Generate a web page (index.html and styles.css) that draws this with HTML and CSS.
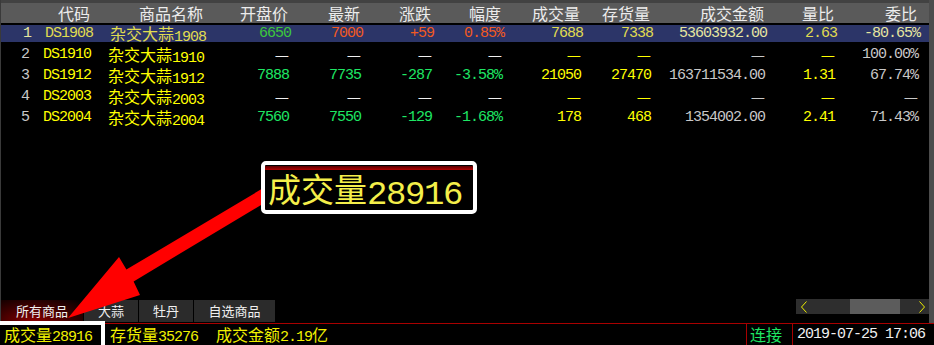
FILE: index.html
```html
<!DOCTYPE html>
<html lang="zh-CN">
<head>
    <meta charset="UTF-8">
    <title>行情列表</title>
    <link rel="stylesheet" href="styles.css">
</head>
<body>
    <div class="screen">
        <div class="main">
            <div class="quotes">
                <div class="row head">
                    <div class="c"></div>
                    <div class="c">代码</div>
                    <div class="c">商品名称</div>
                    <div class="c">开盘价</div>
                    <div class="c">最新</div>
                    <div class="c">涨跌</div>
                    <div class="c">幅度</div>
                    <div class="c">成交量</div>
                    <div class="c">存货量</div>
                    <div class="c">成交金额</div>
                    <div class="c">量比</div>
                    <div class="c">委比</div>
                </div>

                <div class="row sel">
                    <div class="c pale">1</div>
                    <div class="c yel">DS1908</div>
                    <div class="c yel"><span class="cn">杂交大蒜</span>1908</div>
                    <div class="c grn">6650</div>
                    <div class="c red">7000</div>
                    <div class="c red">+59</div>
                    <div class="c red">0.85%</div>
                    <div class="c yel">7688</div>
                    <div class="c yel">7338</div>
                    <div class="c pale">53603932.00</div>
                    <div class="c yel">2.63</div>
                    <div class="c pale">-80.65%</div>
                </div>

                <div class="row">
                    <div class="c gry">2</div>
                    <div class="c yel">DS1910</div>
                    <div class="c yel"><span class="cn">杂交大蒜</span>1910</div>
                    <div class="c wht"><span class="cn">—</span></div>
                    <div class="c wht"><span class="cn">—</span></div>
                    <div class="c wht"><span class="cn">—</span></div>
                    <div class="c wht"><span class="cn">—</span></div>
                    <div class="c yel"><span class="cn">—</span></div>
                    <div class="c yel"><span class="cn">—</span></div>
                    <div class="c gry"><span class="cn">—</span></div>
                    <div class="c yel"><span class="cn">—</span></div>
                    <div class="c gry">100.00%</div>
                </div>

                <div class="row">
                    <div class="c gry">3</div>
                    <div class="c yel">DS1912</div>
                    <div class="c yel"><span class="cn">杂交大蒜</span>1912</div>
                    <div class="c up">7888</div>
                    <div class="c up">7735</div>
                    <div class="c up">-287</div>
                    <div class="c up">-3.58%</div>
                    <div class="c yel">21050</div>
                    <div class="c yel">27470</div>
                    <div class="c gry">163711534.00</div>
                    <div class="c yel">1.31</div>
                    <div class="c gry">67.74%</div>
                </div>

                <div class="row">
                    <div class="c gry">4</div>
                    <div class="c yel">DS2003</div>
                    <div class="c yel"><span class="cn">杂交大蒜</span>2003</div>
                    <div class="c wht"><span class="cn">—</span></div>
                    <div class="c wht"><span class="cn">—</span></div>
                    <div class="c wht"><span class="cn">—</span></div>
                    <div class="c wht"><span class="cn">—</span></div>
                    <div class="c yel"><span class="cn">—</span></div>
                    <div class="c yel"><span class="cn">—</span></div>
                    <div class="c gry"><span class="cn">—</span></div>
                    <div class="c yel"><span class="cn">—</span></div>
                    <div class="c gry"><span class="cn">—</span></div>
                </div>

                <div class="row">
                    <div class="c gry">5</div>
                    <div class="c yel">DS2004</div>
                    <div class="c yel"><span class="cn">杂交大蒜</span>2004</div>
                    <div class="c up">7560</div>
                    <div class="c up">7550</div>
                    <div class="c up">-129</div>
                    <div class="c up">-1.68%</div>
                    <div class="c yel">178</div>
                    <div class="c yel">468</div>
                    <div class="c gry">1354002.00</div>
                    <div class="c yel">2.41</div>
                    <div class="c gry">71.43%</div>
                </div>
            </div>

            <div class="bottom">
                <div class="tabs">
                    <div class="tab active">所有商品</div>
                    <div class="tab">大蒜</div>
                    <div class="tab">牡丹</div>
                    <div class="tab wide">自选商品</div>
                </div>
                <div class="hscroll">
                    <div class="sb-btn">
                        <svg width="8" height="12" viewBox="0 0 8 12"><polyline points="6.5,0.5 1.5,6 6.5,11.5" fill="none" stroke="#f0f000" stroke-width="1"/></svg>
                    </div>
                    <div class="sb-track"><div class="sb-thumb"></div></div>
                    <div class="sb-btn">
                        <svg width="8" height="12" viewBox="0 0 8 12"><polyline points="1.5,0.5 6.5,6 1.5,11.5" fill="none" stroke="#f0f000" stroke-width="1"/></svg>
                    </div>
                </div>
            </div>
        </div>

        <div class="status">
            <div class="stat"><span class="cn">成交量</span>28916</div>
            <div class="stat"><span class="cn">存货量</span>35276</div>
            <div class="stat"><span class="cn">成交金额</span>2.19<span class="cn">亿</span></div>
            <div class="conn cn">连接</div>
            <div class="clock">2019-07-25 17:06</div>
        </div>

        <!-- annotation layer -->
        <svg class="arrow" width="934" height="345" viewBox="0 0 934 345">
            <polygon points="68,318 119,257 126.4,269.6 262,188.8 268.6,200.4 133.6,281.4 140,295" fill="#ff0000"/>
        </svg>
        <div class="mark"></div>
        <div class="callout">
            <div class="callout-bar"></div>
            <div class="callout-text"><span class="big-cn">成交量</span>28916</div>
        </div>
    </div>
</body>
</html>
```

FILE: styles.css
```css
body {
    margin: 0;
    background: #000;
    font-family: "Liberation Mono", "Noto Sans CJK SC", monospace;
    font-size: 15px;
    letter-spacing: -1px;
    color: #c8c8c8;
}
.screen {
    position: relative;
    width: 934px;
    height: 345px;
    overflow: hidden;
    background: #000;
}
.cn {
    font-family: "Noto Sans CJK SC", sans-serif;
    font-size: 16px;
    letter-spacing: 0;
}
.row .cn {
    display: inline-block;
    line-height: 17px;
    vertical-align: 1px;
}
.main {
    height: 323px;
    box-sizing: border-box;
    border-left: 1px solid #3a3a3a;
    border-right: 5px solid #4c4c4c;
    display: flex;
    flex-direction: column;
}
.quotes {
    flex: 1;
}
.row {
    display: grid;
    grid-template-columns: 29px 62px 113px 85px 72px 71px 70px 79px 70px 114px 70px 83px;
    height: 17px;
    line-height: 17px;
    margin-top: 4px;
    white-space: nowrap;
}
.row .c {
    text-align: right;
    padding-right: 1px;
}
.row.head {
    height: 20px;
    line-height: 20px;
    margin-top: 0;
    background: #5a5a5a;
    border-top: 3px solid #424242;
    border-bottom: 2px solid #000;
    font-family: "Noto Sans CJK SC", sans-serif;
    font-size: 16px;
    letter-spacing: 0;
    color: #ececec;
}
.row.head .c {
    padding-right: 2px;
}
.row.head + .row {
    margin-top: 0;
}
.row.sel {
    background: #2c3568;
}
.row.sel .c {
    padding-right: 0;
    margin-right: -1px;
}
.pale { color: #e6e6a0; }
.yel { color: #ffff00; }
.sel .yel { color: #e0dc50; }
.grn { color: #3cc83c; }
.red { color: #f25a22; }
.up { color: #1ee664; }
.wht { color: #f0f0f0; }
.gry { color: #c8c8c8; }

.bottom {
    height: 22px;
    margin-bottom: 1px;
    display: flex;
    align-items: flex-start;
}
.tabs {
    display: flex;
    gap: 1px;
    height: 22px;
}
.tab {
    width: 54px;
    line-height: 22px;
    text-align: center;
    background: #2b2b2b;
    color: #f0f0f0;
    font-family: "Noto Sans CJK SC", sans-serif;
    font-size: 13px;
    letter-spacing: 0;
}
.tab.active {
    width: 82px;
    background: radial-gradient(ellipse at 40% 100%, #8c0000 0%, #3a0000 55%, #000 100%);
}
.tab.wide {
    width: 81px;
}
.hscroll {
    margin-left: auto;
    width: 133px;
    height: 15px;
    margin-top: -1px;
    display: flex;
    background: #2e2e2e;
}
.sb-btn {
    width: 15px;
    display: flex;
    align-items: center;
    justify-content: center;
}
.sb-track {
    flex: 1;
    display: flex;
}
.sb-thumb {
    width: 50px;
    margin-left: 39px;
    background: #5c5c5c;
}

.status {
    height: 21px;
    border-top: 1px solid #a80000;
    display: flex;
    line-height: 21px;
    color: #f0f000;
    white-space: nowrap;
}
.status .cn {
    display: inline-block;
    line-height: 21px;
}
.stat {
    margin-left: 18px;
}
.stat:first-child {
    margin-left: 4px;
}
.conn {
    margin-left: auto;
    width: 42px;
    padding-left: 3px;
    border-left: 1px solid #a80000;
    color: #1ee664;
}
.clock {
    padding-left: 4px;
    padding-right: 9px;
    border-left: 1px solid #a80000;
    color: #f0f0f0;
}

/* annotation overlays */
.arrow {
    position: absolute;
    left: 0;
    top: 0;
}
.mark {
    position: absolute;
    left: -4px;
    top: 321px;
    width: 101px;
    height: 30px;
    border: 4px solid #fff;
}
.callout {
    position: absolute;
    left: 261px;
    top: 161px;
    width: 208px;
    height: 45px;
    border: 4px solid #fff;
    border-radius: 5px;
    background: #000;
}
.callout-bar {
    height: 4px;
    margin-top: 1px;
    background: linear-gradient(#5a0000, #b00000);
}
.callout-text {
    padding-left: 3px;
    line-height: 36px;
    height: 36px;
    color: #f4ef4a;
    font-size: 34px;
    letter-spacing: -1.4px;
    white-space: nowrap;
}
.big-cn {
    font-family: "Noto Sans CJK SC", sans-serif;
    font-size: 33px;
    letter-spacing: 0;
    vertical-align: 2px;
}
```
